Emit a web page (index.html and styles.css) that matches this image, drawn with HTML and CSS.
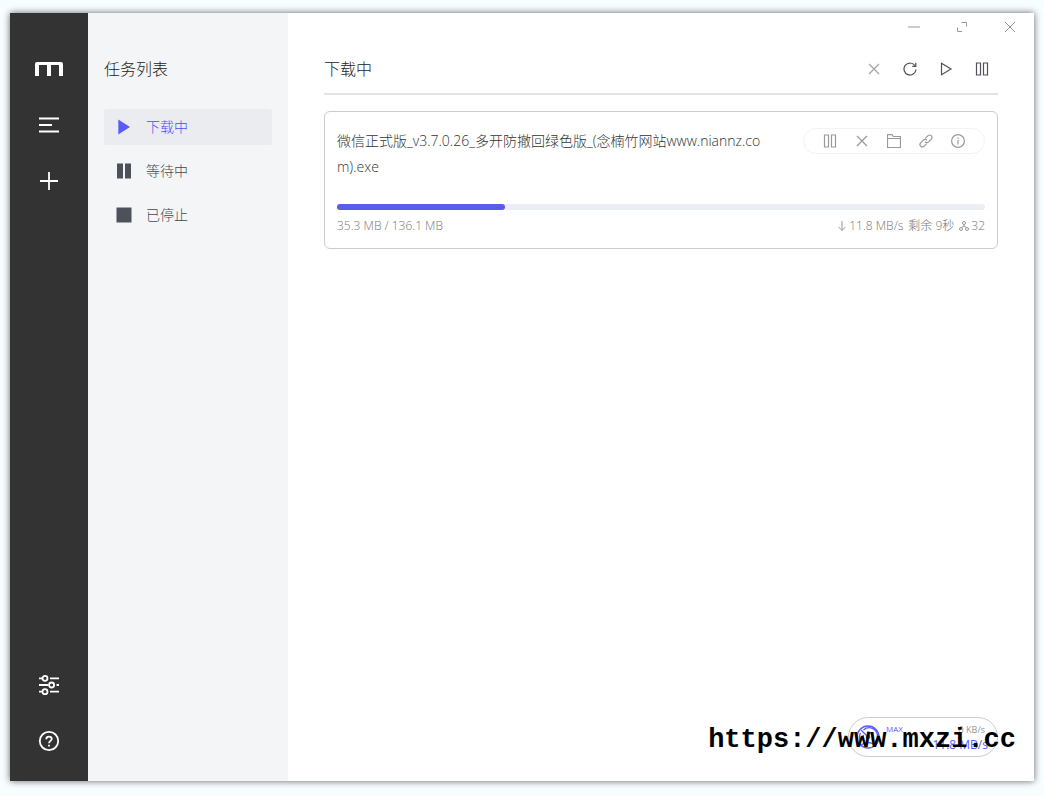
FILE: index.html
```html
<!DOCTYPE html>
<html lang="zh-CN">
<head>
<meta charset="utf-8">
<title>Motrix</title>
<link rel="stylesheet" href="styles.css">
</head>
<body>
<div class="window">
  <aside class="rail">
    <div class="rail-group">
      <svg class="logo" width="28" height="14" viewBox="0 0 28 14" aria-label="Motrix" role="img"><path d="M0 14V2Q0 0 2 0H26Q28 0 28 2V14H24V3H16V14H12V3H4V14Z"/></svg>
      <button class="rail-button" aria-label="任务">
        <svg width="24" height="24" viewBox="0 0 24 24"><path d="M2 5.500H22M2 12H15M2 18.500H22" stroke-width="1.900"/></svg>
      </button>
      <button class="rail-button" aria-label="新建任务">
        <svg width="24" height="24" viewBox="0 0 24 24"><path d="M3 12H21M12 3V21" stroke-width="1.800"/></svg>
      </button>
    </div>
    <div class="rail-group">
      <button class="rail-button" aria-label="偏好设置">
        <svg width="24" height="24" viewBox="0 0 24 24" stroke-width="1.800"><path d="M2 5.300H5M13 5.300H22M2 12H11.500M19.500 12H22M2 18.700H5M13 18.700H22"/><circle cx="8" cy="5.300" r="2.500"/><circle cx="14.600" cy="12" r="2.500"/><circle cx="8" cy="18.700" r="2.500"/></svg>
      </button>
      <button class="rail-button" aria-label="帮助">
        <svg width="24" height="24" viewBox="0 0 24 24" stroke-width="1.800"><circle cx="12" cy="12" r="9.200"/><path d="M9.300 10.200C9.300 8.500 10.400 7.700 12 7.700S14.700 8.700 14.700 10.100C14.700 12 12 12 12 14.200M12 15.700V17.500"/></svg>
      </button>
    </div>
  </aside>

  <nav class="subnav">
    <h2 class="heading">任务列表</h2>
    <ul class="filters">
      <li><a class="filter filter-active" href="#active"><svg width="16" height="16" viewBox="0 0 16 16"><path d="M2.300 0.500 14 8 2.300 15.500Z"/></svg>下载中</a></li>
      <li><a class="filter" href="#waiting"><svg width="16" height="16" viewBox="0 0 16 16"><path d="M1 .5H7V15.500H1ZM9 .5H15V15.500H9Z"/></svg>等待中</a></li>
      <li><a class="filter" href="#stopped"><svg width="16" height="16" viewBox="0 0 16 16"><path d="M.5 .5H15.500V15.500H.5Z"/></svg>已停止</a></li>
    </ul>
  </nav>

  <main class="main">
    <div class="window-controls">
      <button aria-label="最小化"><svg width="12" height="12" viewBox="0 0 12 12"><path d="M0 6H12"/></svg></button>
      <button aria-label="最大化"><svg width="12" height="12" viewBox="0 0 12 12"><path d="M5.500 1.500H10.500V5.500M1.500 6.500V10.500H6"/></svg></button>
      <button aria-label="关闭"><svg width="12" height="12" viewBox="0 0 12 12"><path d="M1 1 11 11M11 1 1 11"/></svg></button>
    </div>

    <header class="panel-header">
      <h1 class="heading">下载中</h1>
      <div class="toolbar">
        <button class="muted" aria-label="删除" disabled><svg width="14" height="14" viewBox="0 0 14 14"><path d="M2 2 12 12M12 2 2 12"/></svg></button>
        <button aria-label="刷新"><svg width="14" height="14" viewBox="0 0 14 14"><path d="M13 7.500A6 6 0 1 1 11.800 3.400M12.800 .8V4.300H9.300"/></svg></button>
        <button aria-label="全部继续"><svg width="14" height="14" viewBox="0 0 14 14"><path d="M2.500 1.300 12 7 2.500 12.700Z"/></svg></button>
        <button aria-label="全部暂停"><svg width="14" height="14" viewBox="0 0 14 14"><path d="M1.500 1H5.500V13H1.500ZM8.500 1H12.500V13H8.500Z"/></svg></button>
      </div>
    </header>

    <article class="task">
      <div class="task-top">
        <div class="task-name">微信正式版_v3.7.0.26_多开防撤回绿色版_(念楠竹网站www.niannz.com).exe</div>
        <div class="task-actions">
          <button aria-label="暂停"><svg width="14" height="14" viewBox="0 0 14 14"><path d="M1.500 1H5.500V13H1.500ZM8.500 1H12.500V13H8.500Z"/></svg></button>
          <button aria-label="删除"><svg width="14" height="14" viewBox="0 0 14 14"><path d="M2 2 12 12M12 2 2 12"/></svg></button>
          <button aria-label="打开文件夹"><svg width="14" height="14" viewBox="0 0 14 14"><path d="M.5 13.500V.7H5L6.300 2.500H13.500V13.500ZM.5 4.500H13.500"/></svg></button>
          <button aria-label="复制链接"><svg width="14" height="14" viewBox="0 0 14 14"><path d="M6.300 4.300 8.800 1.800A2.400 2.400 0 0 1 12.300 5.200L9.600 7.900A2.400 2.400 0 0 1 6.100 7.800M7.700 9.700 5.200 12.200A2.400 2.400 0 0 1 1.700 8.800L4.400 6.100A2.400 2.400 0 0 1 7.900 6.200"/></svg></button>
          <button aria-label="详情"><svg width="14" height="14" viewBox="0 0 14 14"><circle cx="7" cy="7" r="6.400"/><path d="M7 6V10.500M7 3.500V5"/></svg></button>
        </div>
      </div>
      <div class="progress" role="progressbar" aria-label="下载进度" aria-valuenow="26" aria-valuemin="0" aria-valuemax="100"><div class="progress-bar" style="width: 25.94%"></div></div>
      <div class="task-info">
        <span>35.3 MB / 136.1 MB</span>
        <div class="task-stats">
          <span class="stat"><svg width="10" height="10" viewBox="0 0 10 10"><path d="M5 0V9.500M1.500 6 5 9.500 8.500 6"/></svg>11.8 MB/s</span>
          <span>剩余 9秒</span>
          <span class="stat"><svg width="10" height="10" viewBox="0 0 10 10"><circle cx="5" cy="2" r="1.500"/><circle cx="2" cy="8" r="1.500"/><circle cx="8" cy="8" r="1.500"/><path d="M5 3.500V5L2.500 6.500M5 5 7.500 6.500"/></svg>32</span>
        </div>
      </div>
    </article>

    <div class="speedometer">
      <svg width="24" height="24" viewBox="0 0 24 24"><circle cx="12" cy="12" r="11"/><path d="M5 17A8.300 8.300 0 0 1 4.500 8M7.500 5A8.300 8.300 0 0 1 19 17M8 14.500A5 5 0 0 1 7.500 10M11 7A5 5 0 0 1 16 14.500M5 5 12 12M5 20Q12 15 19 20"/><circle cx="12" cy="12" r="1.700"/></svg>
      <span class="speed-mode">MAX</span>
      <div class="speed-values"><span class="speed-up">0 KB/s</span><span class="speed-down">11.8 MB/s</span></div>
    </div>
  </main>
</div>
<div class="watermark">https://www.mxzi.cc</div>
</body>
</html>
```
FILE: styles.css
```css
* {
  box-sizing: border-box;
}

body {
  display: flex;
  min-height: 100vh;
  margin: 0;
  padding: 13px 10px 15px;
  background: #f8fdff;
  color: #303133;
  font-family: "Open Sans", "Noto Sans CJK SC", sans-serif;
  font-size: 14px;
}

button {
  display: flex;
  align-items: center;
  justify-content: center;
  padding: 0;
  border: 0;
  background: none;
  color: inherit;
}

svg {
  display: block;
  flex: none;
  fill: none;
  stroke: currentColor;
}

.window {
  display: flex;
  flex: 1;
  background: #fff;
  box-shadow: 0 0 7px rgba(0, 0, 0, 0.6);
}

.rail {
  display: flex;
  flex-direction: column;
  justify-content: space-between;
  width: 78px;
  padding: 49px 0 24px;
  background: #333;
  color: #fff;
}

.rail-group {
  display: flex;
  flex-direction: column;
  align-items: center;
  gap: 24px;
}

.rail-button {
  width: 32px;
  height: 32px;
}

.logo {
  margin-bottom: 9px;
  fill: #fff;
  stroke: none;
}

.subnav {
  width: 200px;
  padding: 44px 16px;
  background: #f4f5f7;
}

.heading {
  margin: 0;
  color: #222;
  font-size: 16px;
  font-weight: 300;
  line-height: 24px;
}

.filters {
  display: flex;
  flex-direction: column;
  gap: 8px;
  margin: 28px 0 0;
  padding: 0;
  list-style: none;
}

.filter {
  display: flex;
  align-items: center;
  gap: 14px;
  height: 36px;
  padding: 0 12px;
  border-radius: 3px;
  color: #43474f;
  font-weight: 300;
  line-height: 18px;
  text-decoration: none;
}

.filter svg {
  fill: #4d515a;
  stroke: none;
}

.filter-active {
  background: #eaecf0;
  color: #4a4afa;
}

.filter-active svg {
  fill: #5b5bfa;
}

.main {
  position: relative;
  flex: 1;
  min-width: 0;
  padding: 0 36px;
}

.window-controls {
  display: flex;
  justify-content: flex-end;
  gap: 36px;
  height: 28px;
  margin-right: -18px;
  color: #999;
}

.panel-header {
  display: flex;
  align-items: center;
  justify-content: space-between;
  height: 54px;
  padding-top: 4px;
  border-bottom: 2px solid #e4e4e4;
}

.toolbar {
  display: flex;
  gap: 12px;
  margin-right: 4px;
  color: #4d515a;
}

.toolbar svg,
.task-actions svg {
  stroke-width: 1.200;
}

.toolbar button {
  width: 24px;
  height: 24px;
}

.toolbar .muted {
  color: #a0a3a8;
}

.task {
  margin-top: 16px;
  padding: 16px 12px 13px;
  border: 1px solid #ccc;
  border-radius: 6px;
}

.task-top {
  display: flex;
  align-items: flex-start;
  justify-content: space-between;
}

.task-name {
  flex: 1;
  min-height: 52px;
  padding-right: 32px;
  color: #303633;
  font-weight: 300;
  line-height: 26px;
  word-break: break-all;
}

.task-actions {
  display: flex;
  gap: 8px;
  padding: 0 14px;
  border: 1px solid #f3f3f3;
  border-radius: 14px;
  color: #999;
}

.task-actions button {
  width: 24px;
  height: 24px;
}

.progress {
  height: 6px;
  margin-top: 24px;
  border-radius: 3px;
  background: #ebeef5;
}

.progress-bar {
  height: 6px;
  border-radius: 3px;
  background: #5b5bea;
}

.task-info {
  display: flex;
  justify-content: space-between;
  margin-top: 7px;
  color: #777;
  font-size: 12px;
  font-weight: 300;
  line-height: 18px;
}

.task-stats {
  display: flex;
  gap: 5px;
}

.stat {
  display: flex;
  align-items: center;
  gap: 2px;
}

.stat svg {
  color: #999;
}

.speedometer {
  position: absolute;
  right: 36px;
  bottom: 24px;
  display: flex;
  width: 150px;
  height: 40px;
  padding: 7px 12px 7px 7px;
  border: 1px solid #ccc;
  border-radius: 20px;
  color: #5b5bfa;
}

.speedometer svg {
  stroke-width: 1.300;
}

.speed-mode {
  margin-left: 6px;
  font-size: 8px;
  line-height: 8px;
}

.speed-values {
  display: flex;
  flex: 1;
  flex-direction: column;
  align-items: flex-end;
  white-space: nowrap;
}

.speed-up {
  color: #999;
  font-size: 9px;
  line-height: 10px;
}

.speed-down {
  margin-right: -3px;
  font-size: 12px;
  line-height: 20px;
}

.watermark {
  position: absolute;
  right: 28px;
  bottom: 41px;
  color: #000;
  font-family: "Liberation Mono", monospace;
  font-size: 27px;
  font-weight: 700;
  line-height: 30px;
}
```
